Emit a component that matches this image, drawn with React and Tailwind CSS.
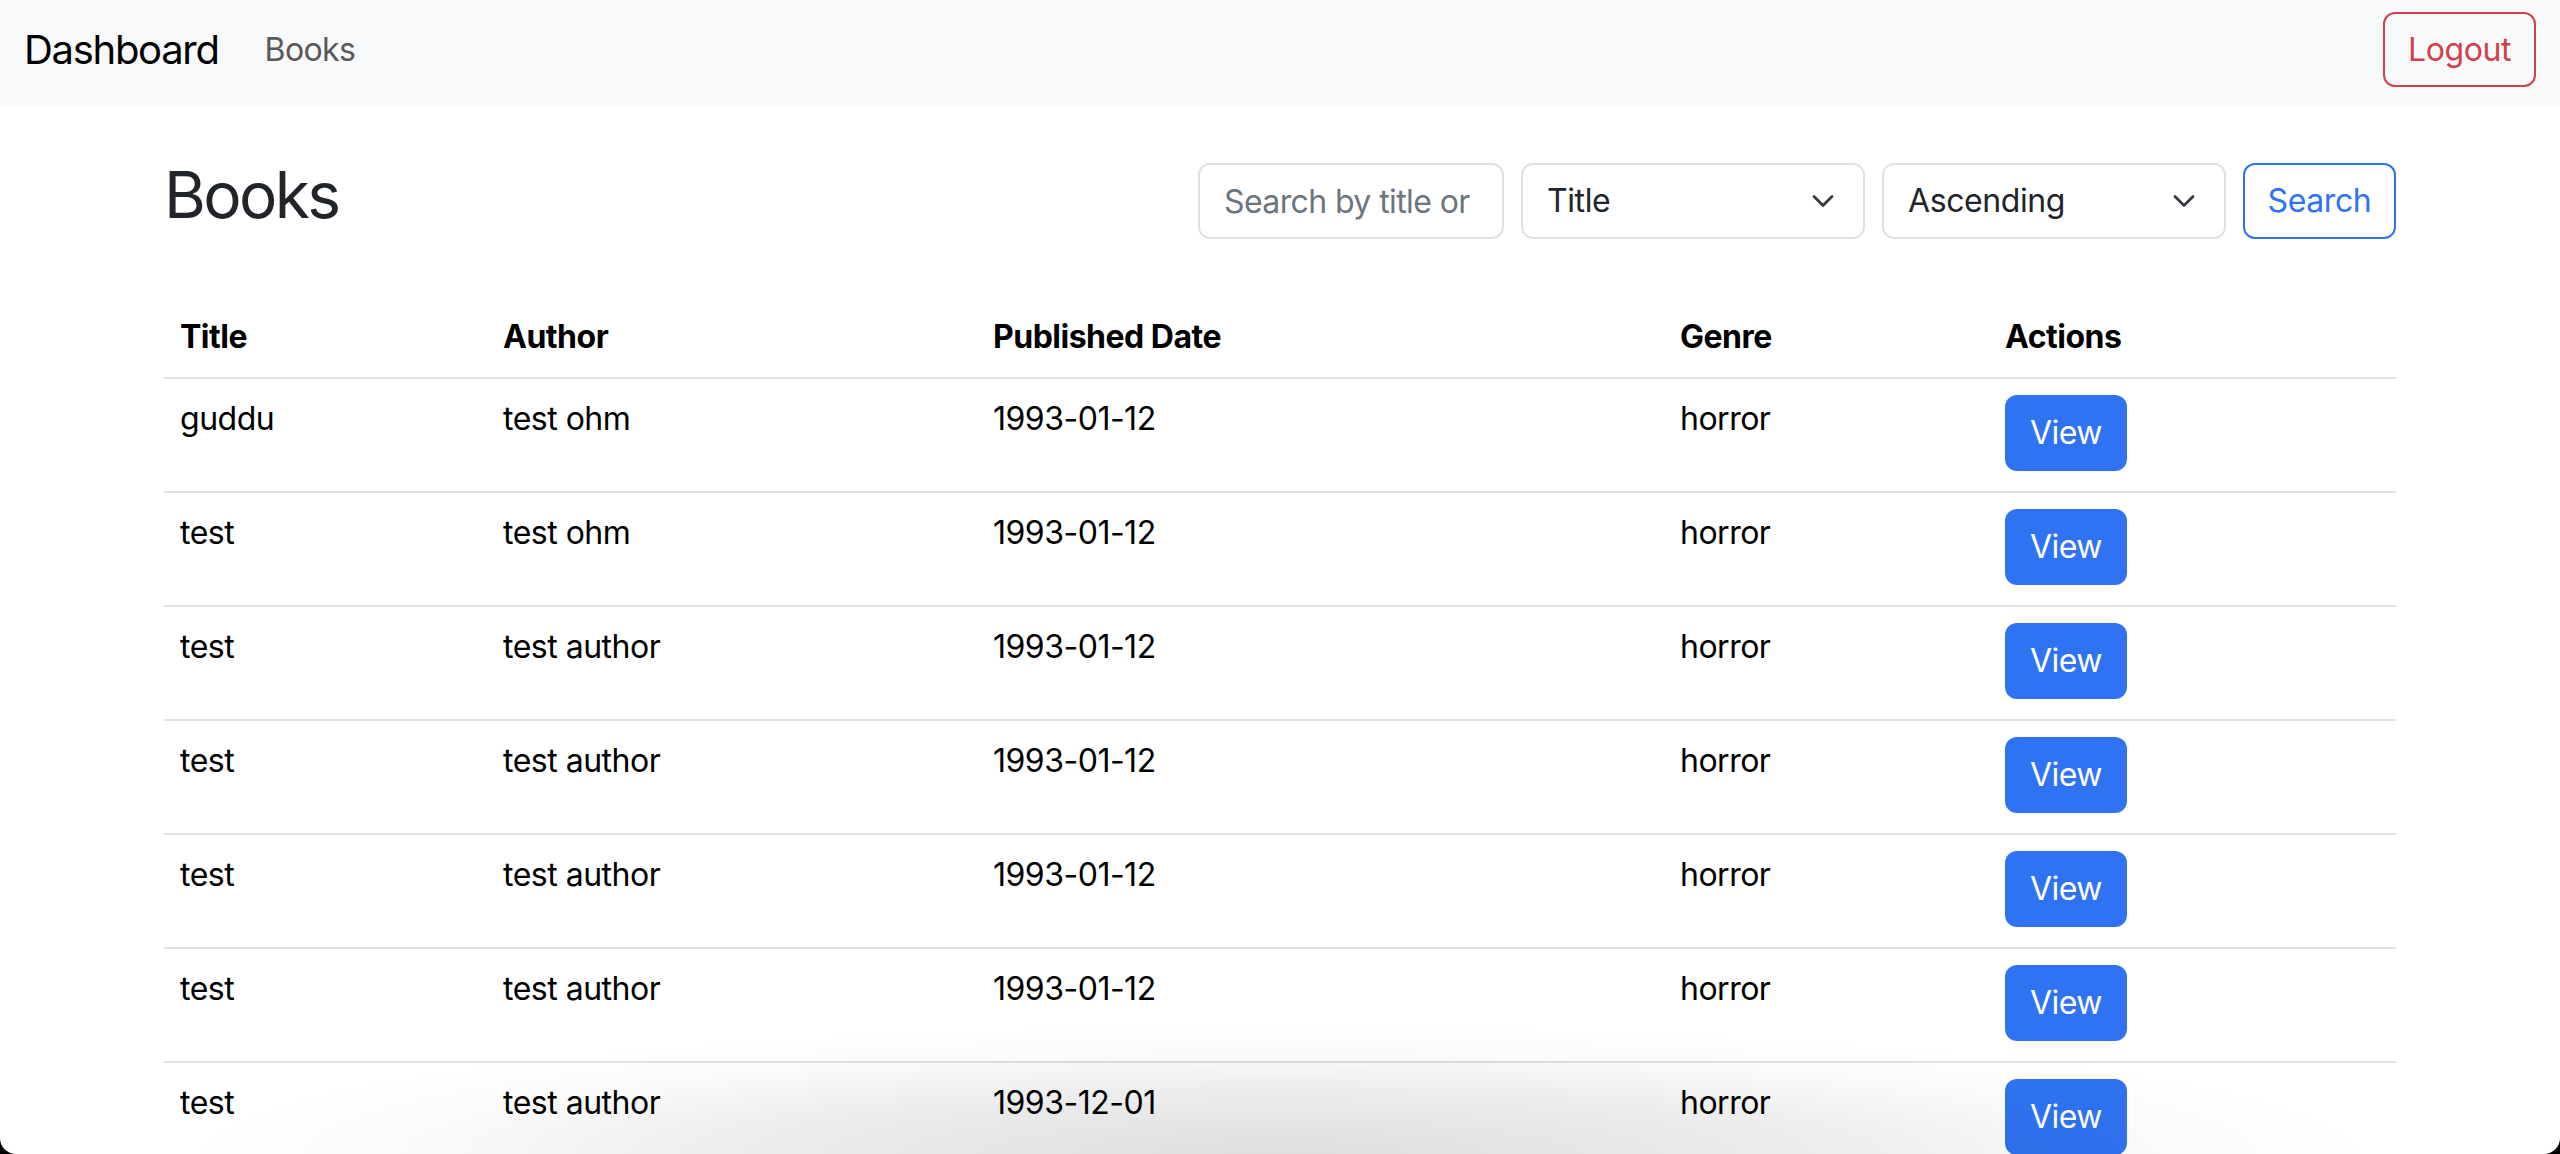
import React from 'react';

const livres = [
  { titre: 'guddu', auteur: 'test ohm', date: '1993-01-12', genre: 'horror' },
  { titre: 'test', auteur: 'test ohm', date: '1993-01-12', genre: 'horror' },
  { titre: 'test', auteur: 'test author', date: '1993-01-12', genre: 'horror' },
  { titre: 'test', auteur: 'test author', date: '1993-01-12', genre: 'horror' },
  { titre: 'test', auteur: 'test author', date: '1993-01-12', genre: 'horror' },
  { titre: 'test', auteur: 'test author', date: '1993-01-12', genre: 'horror' },
  { titre: 'test', auteur: 'test author', date: '1993-12-01', genre: 'horror' },
];

const Chevron = () => (
  <svg width="32" height="24" viewBox="0 0 16 12" className="pointer-events-none absolute right-[24px] top-1/2 -translate-y-1/2">
    <path d="M3.5 3.8l4.5 4.5 4.5-4.5" fill="none" stroke="#343a40" strokeWidth="1.4" strokeLinecap="round" strokeLinejoin="round" />
  </svg>
);

const Selecteur = ({ valeur }) => (
  <div className="relative w-[344px] h-[76px] rounded-[12px] border-2 border-[#dee2e6] bg-white flex items-center pl-[24px] text-[32px] text-[#212529] tracking-[-0.4px]">
    {valeur}
    <Chevron />
  </div>
);

export default function App() {
  return (
    <div className="bg-black font-['Inter',sans-serif]">
      <div className="relative h-[1154px] overflow-hidden rounded-b-[16px] bg-white">
        <nav className="h-[106px] bg-[#f8f9fa] flex items-center justify-between pb-[7px] pl-[24px] pr-[24px]">
          <div className="flex items-center">
            <span className="text-[40px] text-black tracking-[-1.3px]">Dashboard</span>
            <span className="ml-[46px] text-[32px] text-[#595959] tracking-[-0.6px]">Books</span>
          </div>
          <button className="w-[153px] h-[75px] rounded-[12px] border-2 border-[#d0414c] text-[#d0414c] text-[32px] tracking-[-0.4px]">
            Logout
          </button>
        </nav>

        <main className="w-[2232px] mx-auto pt-[57px]">
          <div className="flex items-center justify-between h-[76px]">
            <h2 className="text-[64px] text-[#212529] leading-[1.2] tracking-[-2.6px] pb-[12px]">Books</h2>
            <div className="flex items-center gap-[17px]">
              <input
                type="text"
                placeholder="Search by title or author"
                className="w-[306px] h-[76px] rounded-[12px] border-2 border-[#dee2e6] px-[24px] text-[32px] tracking-[-0.6px] placeholder:text-[#6c757d] outline-none"
              />
              <Selecteur valeur="Title" />
              <Selecteur valeur="Ascending" />
              <button className="w-[153px] h-[76px] rounded-[12px] border-2 border-[#2f73f2] text-[#2f73f2] text-[32px] tracking-[-0.4px]">
                Search
              </button>
            </div>
          </div>

          <table className="mt-[58px] w-full table-fixed border-collapse text-[32px] text-black tracking-[-0.5px]">
            <thead>
              <tr className="border-b-2 border-[#dee2e6]">
                <th className="w-[323px] text-left font-bold p-[16px] leading-[48px]">Title</th>
                <th className="w-[490px] text-left font-bold p-[16px] leading-[48px]">Author</th>
                <th className="w-[687px] text-left font-bold p-[16px] leading-[48px]">Published Date</th>
                <th className="w-[325px] text-left font-bold p-[16px] leading-[48px]">Genre</th>
                <th className="w-[407px] text-left font-bold p-[16px] leading-[48px]">Actions</th>
              </tr>
            </thead>
            <tbody>
              {livres.map((l, i) => (
                <tr key={i} className="h-[114px] border-b-2 border-[#dee2e6] align-top">
                  <td className="px-[16px] pt-[16px] leading-[48px]">{l.titre}</td>
                  <td className="px-[16px] pt-[16px] leading-[48px]">{l.auteur}</td>
                  <td className="px-[16px] pt-[16px] leading-[48px]">{l.date}</td>
                  <td className="px-[16px] pt-[16px] leading-[48px]">{l.genre}</td>
                  <td className="px-[16px] pt-[16px]">
                    <button className="w-[122px] h-[76px] rounded-[12px] bg-[#2f73f2] text-white text-[32px]">
                      View
                    </button>
                  </td>
                </tr>
              ))}
            </tbody>
          </table>
        </main>

        <div className="pointer-events-none absolute bottom-0 left-[180px] right-[180px] h-[130px] bg-[radial-gradient(ellipse_50%_100%_at_50%_100%,rgba(0,0,0,0.13),rgba(0,0,0,0.07)_50%,rgba(0,0,0,0.02)_78%,transparent_100%)]" />
      </div>
    </div>
  );
}
